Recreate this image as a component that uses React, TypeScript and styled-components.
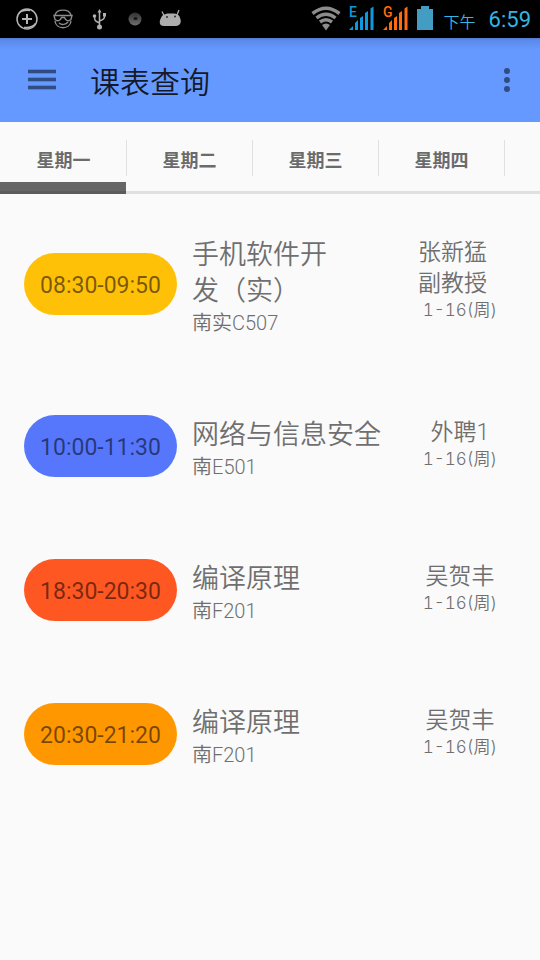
import React from "react";
import styled, { createGlobalStyle } from "styled-components";

const Global = createGlobalStyle`
  *, *::before, *::after { box-sizing: border-box; }
  html { background: #fafafa; }
  body {
    margin: 0;
    color: #6f6f6f;
    font-family: Roboto, "Noto Sans CJK SC", sans-serif;
    font-weight: 350;
  }
  button { font: inherit; border: 0; background: none; padding: 0; cursor: pointer; }
  h1, h2, p, ul { margin: 0; padding: 0; font-weight: inherit; }
`;

const StatusBar = styled.div`
  display: flex;
  justify-content: space-between;
  align-items: center;
  height: 38px;
  padding: 0 9px 0 15px;
  background: #000;
  color: #33b5e5;
`;

const StatusGroup = styled.div<{ $gap: number }>`
  display: flex;
  align-items: center;
  gap: ${(p) => p.$gap}px;
`;

const Period = styled.span`
  padding: 8px 5px 0 3px;
  font-size: 16px;
  line-height: 24px;
`;

const Clock = styled.time`
  padding-top: 1px;
  font-size: 22px;
  font-weight: 400;
  line-height: 36px;
`;

const AppBar = styled.header`
  display: flex;
  align-items: center;
  height: 84px;
  padding: 0 16px 0 28px;
  background: linear-gradient(#5079ca 0, #5b8aea 2px, #6699ff 12px);
`;

const IconButton = styled.button`
  display: flex;
  justify-content: center;
  color: #304c83;
`;

const Title = styled.h1`
  flex: 1;
  padding: 5px 0 0 34px;
  color: #14192a;
  font-size: 30px;
  line-height: 40px;
`;

const Tabs = styled.div`
  display: flex;
  height: 72px;
  overflow: hidden;
  box-shadow: inset 0 -3px #e0e0e0;
`;

const Tab = styled.button<{ $active?: boolean }>`
  position: relative;
  flex: 0 0 126px;
  padding: 5px 0 0 1px;
  color: #6b6b6b;
  font-size: 18px;
  font-weight: 700;
  line-height: 24px;
  background: ${(p) =>
    p.$active ? "linear-gradient(#666 9px, #5c5c5c 9px) bottom / 100% 12px no-repeat" : "none"};

  &::after {
    content: "";
    position: absolute;
    top: 18px;
    right: -1px;
    width: 1px;
    height: 36px;
    background: #e0e0e0;
  }
`;

const Lessons = styled.ul`
  list-style: none;
`;

const Lesson = styled.li`
  display: grid;
  grid-template-columns: 153px 1fr 84px;
  gap: 15px;
  padding: 43px 38px 37px 24px;
`;

const TimePill = styled.time<{ $color: string }>`
  display: flex;
  align-items: center;
  justify-content: center;
  align-self: center;
  height: 62px;
  margin: -3px 0 3px;
  padding-top: 2px;
  border-radius: 31px;
  background: ${(p) => p.$color};
  color: rgba(0, 0, 0, 0.54);
  font-size: 23px;
  font-weight: 400;
`;

const Course = styled.h2`
  font-size: 27px;
  line-height: 36px;
`;

const Room = styled.p`
  font-size: 20px;
  line-height: 28px;
`;

const TeacherColumn = styled.div`
  display: flex;
  flex-direction: column;
  align-items: center;
`;

const Teacher = styled.p`
  font-size: 23px;
  line-height: 31px;
`;

const Weeks = styled.p`
  font-family: Inter, "Noto Sans CJK SC", sans-serif;
  font-size: 17px;
  line-height: 22px;
  font-variant-numeric: tabular-nums;
`;

const SignalIcon = styled.svg`
  overflow: visible;
`;

const SignalLabel = styled.text`
  font-size: 14px;
  font-weight: 500;
`;

const Signal = ({ color, label }: { color: string; label: string }) => (
  <SignalIcon width="26" height="32" viewBox="0 -3 26 32" fill={color}>
    <SignalLabel x="0" y="11">{label}</SignalLabel>
    <path d="M0 24l4-4v4zM6 24v-7l3-3v10zM11 24V12l3-2v14zM16 24V7l3-2v19zM21.500 24V2.500l3-2V24z" />
  </SignalIcon>
);

const lessons = [
  { time: "08:30-09:50", color: "#ffc107", course: ["手机软件开", "发（实）"], room: "南实C507", teacher: "张新猛 副教授" },
  { time: "10:00-11:30", color: "#5677fc", course: ["网络与信息安全"], room: "南E501", teacher: "外聘1" },
  { time: "18:30-20:30", color: "#ff5722", course: ["编译原理"], room: "南F201", teacher: "吴贺丰" },
  { time: "20:30-21:20", color: "#ff9800", course: ["编译原理"], room: "南F201", teacher: "吴贺丰" },
];

const days = ["星期一", "星期二", "星期三", "星期四"];

export default function App() {
  return (
    <>
      <Global />
      <StatusBar>
        <StatusGroup $gap={12}>
          <svg width="24" height="24" viewBox="0 0 24 24" fill="none" stroke="#b4b4b4">
            <circle cx="12" cy="12" r="10" strokeWidth="1.5" />
            <path d="M3.500 7C6 3.500 10 3 15 3.500M9 20.500c5 .5 9-.5 11.500-4" strokeWidth="1.500" />
            <path d="M12 7v10M7 12h10" strokeWidth="2" />
          </svg>
          <svg width="24" height="24" viewBox="0 0 24 24" fill="none" stroke="#8c8c8c" strokeWidth="1.4">
            <path d="M4 8C6 1.500 18 1.500 20 8M4 14c1 9 15 9 16 0M8 16c3 2.500 7 1.500 9-1" />
            <path d="M3 8.500h18l-1 4c-2 2-5.500 1.500-6.500-2h-3c-1 3.500-4.500 4-6.500 2z" />
          </svg>
          <svg width="26" height="24" viewBox="0 0 26 24" fill="none" stroke="#b0b0b0" strokeWidth="1.500">
            <path d="M12.500 4v16M12.500 16c-4-2-5-2-5-6.500M12.500 14c4-1.500 5-2 5-5" />
            <g fill="#b0b0b0" stroke="none">
              <path d="M10.500 5.500L12.500 2l2 3.500zM16 6h3v3.500h-3z" />
              <circle cx="7.500" cy="9" r="1.800" />
              <circle cx="12.500" cy="20" r="2.500" />
            </g>
          </svg>
          <svg width="20" height="24" viewBox="0 0 20 24">
            <defs>
              <linearGradient id="ball" x2="0" y2="1">
                <stop stopColor="#303030" /><stop offset="1" stopColor="#707070" />
              </linearGradient>
            </defs>
            <circle cx="10" cy="12" r="6.500" fill="url(#ball)" />
            <ellipse cx="10.500" cy="11.500" rx="2" ry="1.500" fill="#161616" />
          </svg>
          <svg width="26" height="24" viewBox="0 0 26 24" fill="#adadad">
            <path d="M5 4.500l2.500 5M22 3l-2.500 6" stroke="#adadad" strokeWidth="1.300" />
            <path d="M4 11c1-3.500 5-5 10-4.500 5-.5 8.500 1 9 4.500 2 4 0 8-4 8h-12c-5 0-5-4.500-3-8z" />
            <circle cx="10" cy="10" r=".9" fill="#222" />
            <circle cx="18" cy="9.500" r=".9" fill="#222" />
          </svg>
        </StatusGroup>
        <StatusGroup $gap={8}>
          <svg width="30" height="26" viewBox="0 0 30 26" fill="none" stroke="#8c8c8c" strokeWidth="3.500">
            <path d="M1.500 7.500Q15-3 28.500 7.500M5.500 12Q15 4.500 24.500 12M9 16Q15 11.500 21 16" />
            <path d="M11 19Q15 16 19 19L15 24.500z" fill="#8c8c8c" stroke="none" />
          </svg>
          <Signal color="#0c99df" label="E" />
          <Signal color="#ff6c0c" label="G" />
          <svg width="16" height="26" viewBox="0 0 16 26" fill="#439cc2">
            <path d="M4 0h8v3h4v21H0V3h4z" />
          </svg>
          <Period>下午</Period>
          <Clock>6:59</Clock>
        </StatusGroup>
      </StatusBar>
      <AppBar>
        <IconButton aria-label="菜单">
          <svg width="28" height="28" viewBox="0 0 28 28" fill="currentColor">
            <path d="M0 4h28v3H0zM0 12h28v3H0zM0 20h28v3H0z" />
            <path d="M0 3h28v5H0zM0 11h28v5H0zM0 19h28v5H0z" opacity=".3" />
          </svg>
        </IconButton>
        <Title>课表查询</Title>
        <IconButton aria-label="更多">
          <svg width="34" height="28" viewBox="0 0 34 28" fill="currentColor">
            <circle cx="17" cy="5" r="3" /><circle cx="17" cy="14" r="3" /><circle cx="17" cy="23" r="3" />
          </svg>
        </IconButton>
      </AppBar>
      <Tabs role="tablist">
        {days.map((d, i) => (
          <Tab key={d} role="tab" aria-selected={i === 0} $active={i === 0}>{d}</Tab>
        ))}
      </Tabs>
      <Lessons>
        {lessons.map((l) => (
          <Lesson key={l.time}>
            <TimePill $color={l.color}>{l.time}</TimePill>
            <div>
              <Course>{l.course.map((c, i) => <React.Fragment key={c}>{i > 0 && <br />}{c}</React.Fragment>)}</Course>
              <Room>{l.room}</Room>
            </div>
            <TeacherColumn>
              <Teacher>{l.teacher}</Teacher>
              <Weeks>1-16(周)</Weeks>
            </TeacherColumn>
          </Lesson>
        ))}
      </Lessons>
    </>
  );
}
